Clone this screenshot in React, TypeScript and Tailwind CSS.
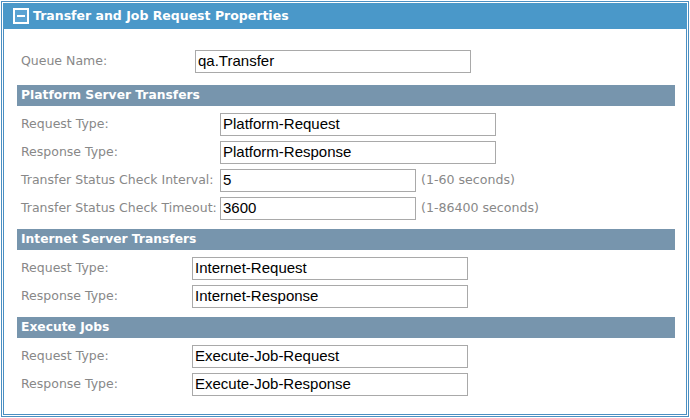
const labelFont = { fontFamily: '"DejaVu Sans", Verdana, sans-serif' };

interface Row {
  label: string;
  value: string;
  short?: boolean;
  hint?: string;
}

const FieldRow = ({ row, labelWidth }: { row: Row; labelWidth: string }) => (
  <div className="flex items-center h-[23px]">
    <div
      className={`${labelWidth} shrink-0 pl-[4px] text-[12.5px] text-[#888888] leading-none whitespace-nowrap`}
      style={labelFont}
    >
      {row.label}
    </div>
    <div
      className={`${row.short ? "w-[196px]" : "w-[276px]"} h-[23px] border border-[#a9a9a9] flex items-center pl-[2px] text-[15px] text-black`}
      style={{ fontFamily: '"Liberation Sans", Arial, sans-serif' }}
    >
      {row.value}
    </div>
    {row.hint && (
      <span
        className="ml-[5px] text-[12.6px] text-[#888888] leading-none"
        style={labelFont}
      >
        {row.hint}
      </span>
    )}
  </div>
);

const SectionBar = ({ title }: { title: string }) => (
  <div
    className="h-[21px] bg-[#7795ad] flex items-center pl-[4px] text-[12.3px] font-bold text-white"
    style={labelFont}
  >
    {title}
  </div>
);

const sections: { title: string; labelWidth: string; rows: Row[] }[] = [
  {
    title: "Platform Server Transfers",
    labelWidth: "w-[203px]",
    rows: [
      { label: "Request Type:", value: "Platform-Request" },
      { label: "Response Type:", value: "Platform-Response" },
      {
        label: "Transfer Status Check Interval:",
        value: "5",
        short: true,
        hint: "(1-60 seconds)",
      },
      {
        label: "Transfer Status Check Timeout:",
        value: "3600",
        short: true,
        hint: "(1-86400 seconds)",
      },
    ],
  },
  {
    title: "Internet Server Transfers",
    labelWidth: "w-[175px]",
    rows: [
      { label: "Request Type:", value: "Internet-Request" },
      { label: "Response Type:", value: "Internet-Response" },
    ],
  },
  {
    title: "Execute Jobs",
    labelWidth: "w-[175px]",
    rows: [
      { label: "Request Type:", value: "Execute-Job-Request" },
      { label: "Response Type:", value: "Execute-Job-Response" },
    ],
  },
];

const App = () => {
  return (
    <div className="w-[690px] h-[418px] bg-white pt-[1px] pl-[1px]">
      <div className="w-[688px] h-[416px] border border-[#4b8fc2] p-[1px]">
        <div className="h-full border-x border-b border-[#4b8fc2] flex flex-col">
          {/* Header */}
          <div className="h-[26px] shrink-0 bg-[#4a98c9] flex items-center -mx-[1px] px-[10px]">
            <div className="w-[16px] h-[16px] border-2 border-white bg-[#5aa3d3] flex items-center justify-center">
              <div className="w-[8px] h-[2px] bg-white" />
            </div>
            <span
              className="ml-[4px] text-[12.5px] font-bold text-white"
              style={labelFont}
            >
              Transfer and Job Request Properties
            </span>
          </div>

          <div className="pl-[13px] pr-[11px]">
            <div className="mt-[21px]">
              <FieldRow
                row={{ label: "Queue Name:", value: "qa.Transfer" }}
                labelWidth="w-[178px]"
              />
            </div>

            {sections.map((s, i) => (
              <div key={s.title} className={i === 0 ? "mt-[12px]" : "mt-[9px]"}>
                <SectionBar title={s.title} />
                <div className="mt-[7px] flex flex-col gap-[5px]">
                  {s.rows.map((r) => (
                    <FieldRow key={r.label} row={r} labelWidth={s.labelWidth} />
                  ))}
                </div>
              </div>
            ))}
          </div>
        </div>
      </div>
    </div>
  );
};

export default App;
